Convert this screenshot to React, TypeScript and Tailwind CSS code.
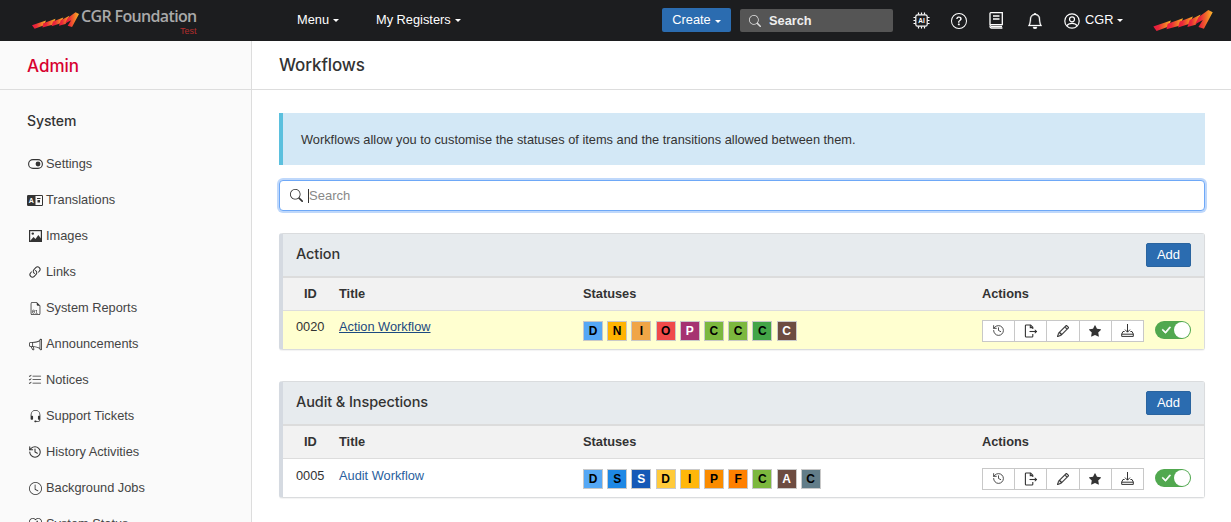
import React from "react";
import {
  BsLink45Deg, BsFileEarmarkBinary, BsMegaphone, BsListCheck, BsHeadset, BsClock, BsHeartPulse,
  BsSearch, BsQuestionCircle, BsBell, BsPencil, BsStarFill, BsCheckLg,
} from "react-icons/bs";
import { History } from "lucide-react";

const Caret = () => (
  <span className="ml-[4px] inline-block w-0 h-0 align-middle border-x-[3px] border-x-transparent border-t-[3px] border-t-current" />
);

function Logo({ w, h, id }: { w: number; h: number; id: string }) {
  return (
    <svg width={w} height={h} viewBox="0 0 54 20" className="shrink-0">
      <defs>
        <linearGradient id={id} x1="0" x2="1" y1="0" y2="0">
          <stop offset="0" stopColor="#e8173f" />
          <stop offset="0.3" stopColor="#e9283a" />
          <stop offset="0.6" stopColor="#f1662a" />
          <stop offset="0.85" stopColor="#f79a28" />
          <stop offset="1" stopColor="#fbb532" />
        </linearGradient>
      </defs>
      <g fill={`url(#${id})`}>
        <polygon points="0,15 16,9.5 14,15 3,19" />
        <polygon points="13,12.5 27,7.5 24.5,14 12,17.5" />
        <polygon points="24,10.5 36,6 33,12.5 22.5,16" />
        <polygon points="33,9 43,4 38.5,13.5 31,15.5" />
        <polygon points="41,6.5 50,0 54,2 46,17 41,15.5 45,9 38,13" />
      </g>
    </svg>
  );
}

function ChipIcon() {
  return (
    <svg width="17" height="17" viewBox="0 0 17 17" fill="none" stroke="#fff" strokeWidth="1.2">
      <rect x="2.8" y="2.8" width="11.4" height="11.4" rx="1.8" />
      <path d="M5.5 0.5v2M8.5 0.5v2M11.5 0.5v2M5.5 14.5v2M8.5 14.5v2M11.5 14.5v2M0.5 5.5h2M0.5 8.5h2M0.5 11.5h2M14.5 5.5h2M14.5 8.5h2M14.5 11.5h2" />
      <text x="8.5" y="11" fill="#fff" stroke="none" fontSize="6.5" fontWeight="700" textAnchor="middle" fontFamily="Liberation Sans">AI</text>
    </svg>
  );
}

const ToggleIcon = () => (
  <svg width="15" height="10" viewBox="0 0 15 10" fill="none" stroke="currentColor" strokeWidth="1.1">
    <rect x="0.6" y="0.6" width="13.8" height="8.8" rx="4.4" />
    <circle cx="10" cy="5" r="2.4" fill="currentColor" stroke="none" />
  </svg>
);

const TranslateIcon = () => (
  <svg width="16" height="11" viewBox="0 0 16 11">
    <rect x="0" y="0" width="16" height="11" rx="1.2" fill="currentColor" />
    <rect x="8.5" y="1" width="6.5" height="9" fill="#fafafa" />
    <text x="4.4" y="8.2" fill="#fafafa" fontSize="7" fontWeight="700" textAnchor="middle" fontFamily="Liberation Sans">A</text>
    <rect x="10" y="3" width="3.5" height="1" fill="currentColor" />
    <rect x="10.5" y="5" width="2.5" height="2.5" fill="currentColor" />
  </svg>
);

const BookIcon = () => (
  <svg width="15" height="17" viewBox="0 0 15 17" fill="none" stroke="#fff" strokeWidth="1.3">
    <path d="M1 13V1.5a.8.8 0 0 1 .8-.8h11.5V12.6H2.4A1.7 1.7 0 0 0 1 14.4 1.7 1.7 0 0 0 2.4 16h11" />
    <path d="M4 4h6.5M4 7h6.5M2 14.4h11" />
  </svg>
);

const UserIcon = () => (
  <svg width="16" height="16" viewBox="0 0 16 16" fill="none" stroke="#fff" strokeWidth="1.2">
    <circle cx="8" cy="8" r="7.2" />
    <circle cx="8" cy="6.3" r="2.5" />
    <path d="M3 12.8c.8-1.6 2.6-2.4 5-2.4s4.2.8 5 2.4" />
  </svg>
);

const ExportIcon = () => (
  <svg width="14" height="14" viewBox="0 0 14 14" fill="none" stroke="currentColor" strokeWidth="1.1">
    <path d="M8.8 5V3.2L6.6 1H2.2a.8.8 0 0 0-.8.8v10.4c0 .4.4.8.8.8h5.8c.4 0 .8-.4.8-.8V10" />
    <path d="M6.3 1v2.6h2.5" />
    <path d="M5.5 7.5h7.5" />
    <path d="M10.8 5.3l2.4 2.2-2.4 2.2" fill="currentColor" stroke="none" />
  </svg>
);

const TrayIcon = () => (
  <svg width="13" height="13" viewBox="0 0 13 13" fill="none" stroke="currentColor" strokeWidth="1">
    <path d="M6.5 0v8M4 5.6l2.5 2.6L9 5.6" />
    <path d="M3.6 7.5H2L.7 10v2.4h11.6V10L11 7.5H9.4" />
    <path d="M.7 10.2h11.6" />
  </svg>
);

const ImageIcon = () => (
  <svg width="13" height="12" viewBox="0 0 13 12">
    <rect x="0.6" y="0.6" width="11.8" height="10.8" fill="none" stroke="currentColor" strokeWidth="1.2" />
    <circle cx="3.8" cy="3.6" r="1.2" fill="currentColor" />
    <path d="M1 11l3.5-4 2 2 2.8-4L12.4 9v2.4z" fill="currentColor" />
  </svg>
);

const nav: [React.ReactNode, string][] = [
  [<ToggleIcon />, "Settings"],
  [<TranslateIcon />, "Translations"],
  [<ImageIcon />, "Images"],
  [<BsLink45Deg size={17} />, "Links"],
  [<BsFileEarmarkBinary size={13} />, "System Reports"],
  [<BsMegaphone size={13} />, "Announcements"],
  [<BsListCheck size={14} />, "Notices"],
  [<BsHeadset size={13} />, "Support Tickets"],
  [<History size={14} strokeWidth={1.8} />, "History Activities"],
  [<BsClock size={13} />, "Background Jobs"],
  [<BsHeartPulse size={13} />, "System Status"],
];

type S = [string, string, string];
const actionStatuses: S[] = [
  ["D", "#55a8f5", "#000"], ["N", "#ffb300", "#000"], ["I", "#f0a546", "#000"], ["O", "#f04a4a", "#000"], ["P", "#a63371", "#fff"],
  ["C", "#7cb83e", "#000"], ["C", "#7cb83e", "#000"], ["C", "#43a547", "#000"], ["C", "#6d4c41", "#fff"],
];
const auditStatuses: S[] = [
  ["D", "#55a8f5", "#000"], ["S", "#1e88e5", "#000"], ["S", "#1559b7", "#fff"], ["D", "#ffca3a", "#000"], ["I", "#ffb70a", "#000"],
  ["P", "#fb8c00", "#000"], ["F", "#ff8000", "#000"], ["C", "#7cb83e", "#000"], ["A", "#6d4c41", "#fff"], ["C", "#627d89", "#000"],
];

function Panel({ title, id, name, statuses, highlight }: { title: string; id: string; name: string; statuses: S[]; highlight?: boolean }) {
  const actions = [<History size={13} strokeWidth={1.6} />, <ExportIcon />, <BsPencil size={12} strokeWidth={0.5} />, <BsStarFill size={12} />, <TrayIcon />];
  const textOffset = highlight ? "-mt-[6px]" : "-mt-[5px]";
  return (
    <section className="rounded-[3px] border border-[#dadcde] border-l-[4px] border-l-[#d5dae1] bg-white shadow-[0_1px_1px_rgba(0,0,0,0.05)]">
      <div className="h-[44px] flex items-center justify-between pl-[13px] pr-[13px] bg-[#e7ebee] border-b-2 border-[#dcdcdc]">
        <h3 className="text-[14.5px] text-[#333] font-medium font-['Inter',sans-serif] tracking-[-0.1px] -mt-[2px]">{title}</h3>
        <button className="w-[45px] h-[24px] rounded-[2px] bg-[#2b6cb0] border border-[#2a649f] text-white text-[13px]">Add</button>
      </div>
      <div className="h-[33px] flex items-center bg-[#f2f2f2] border-b border-[#ddd] text-[12.8px] font-bold text-[#333]">
        <div className="w-[56px] pl-[21px]">ID</div>
        <div className="w-[244px]">Title</div>
        <div className="w-[399px]">Statuses</div>
        <div>Actions</div>
      </div>
      <div className={"h-[38px] flex items-center text-[12.8px] text-[#333] " + (highlight ? "bg-[#ffffd0]" : "bg-white")}>
        <div className={"w-[56px] pl-[13px] " + textOffset}>{id}</div>
        <div className={"w-[244px] " + textOffset}>
          <a className={highlight ? "text-[#1c4a80] underline" : "text-[#2a5f9e]"}>{name}</a>
        </div>
        <div className="w-[399px] flex gap-[4.2px] mt-px">
          {statuses.map((s, i) => (
            <span
              key={i}
              className="w-[20px] h-[20px] flex items-center justify-center border border-[#c9c9c9] text-[12px] font-bold"
              style={{ background: s[1], color: s[2] }}
            >
              {s[0]}
            </span>
          ))}
        </div>
        <div className="flex items-center h-[22px] w-[162px] border border-[#c8c8c8] bg-white mt-px divide-x divide-[#c8c8c8] text-[#333]">
          {actions.map((a, i) => (
            <span key={i} className="flex-1 h-full flex items-center justify-center">{a}</span>
          ))}
        </div>
        <div className="ml-[11px] w-[36px] h-[18px] rounded-full bg-[#51a84f] relative flex items-center pl-[5px]">
          <BsCheckLg size={12} className="text-white" strokeWidth={1} />
          <span className="absolute right-[1px] top-[1px] w-[16px] h-[16px] rounded-full bg-white" />
        </div>
      </div>
    </section>
  );
}

export default function App() {
  return (
    <div className="h-[522px] w-[1231px] overflow-hidden flex flex-col bg-white font-['Liberation_Sans',Arial,sans-serif]">
      <header className="h-[41px] shrink-0 bg-[#1c1d1f] flex items-center text-white text-[12.8px]">
        <div className="w-[297px] shrink-0 flex items-center pl-[32px]">
          <Logo w={47} h={18} id="lg1" />
          <div className="ml-[2px] relative -mt-[5px]">
            <span className="text-[#a9a9a9] text-[16px] font-semibold tracking-[-0.65px] leading-none font-['Open_Sans',sans-serif]">CGR Foundation</span>
            <span className="absolute right-0 top-[19px] text-[#b22d2d] text-[9px] leading-none">Test</span>
          </div>
        </div>
        <span className="w-[79px] -mt-[2px]">Menu<Caret /></span>
        <span className="w-[286px] -mt-[2px]">My Registers<Caret /></span>
        <button className="w-[69px] h-[24px] rounded-[2px] bg-[#2b6cb0] text-white text-[12.8px] -mt-px">Create<Caret /></button>
        <div className="ml-[9px] w-[153px] h-[23px] rounded-[2px] bg-[#555] flex items-center pl-[9px] font-bold text-[12.8px]">
          <BsSearch size={12} className="mr-[8px] text-[#ddd]" />
          <span className="text-[#eee]">Search</span>
        </div>
        <div className="ml-[20px] flex items-center">
          <span className="w-[38px]"><ChipIcon /></span>
          <span className="w-[37px]"><BsQuestionCircle size={16} /></span>
          <span className="w-[38px] pl-px"><BookIcon /></span>
          <span className="w-[35px] pl-px"><BsBell size={16} strokeWidth={0.3} /></span>
          <span className="ml-[3px]"><UserIcon /></span>
          <span className="ml-[5px] w-[68px] -mt-[2px]">CGR<Caret /></span>
        </div>
        <Logo w={60} h={22} id="lg2" />
      </header>
      <div className="flex-1 flex min-h-0">
        <aside className="w-[252px] shrink-0 bg-[#fafafa] border-r border-[#ddd] overflow-hidden">
          <div className="h-[49px] border-b border-[#ddd] pl-[27px] flex items-center">
            <h2 className="text-[#d7002f] text-[17px] font-medium font-['Inter',sans-serif] mt-[3px]">Admin</h2>
          </div>
          <div className="pl-[27px] pt-[23px] text-[#333]">
            <h4 className="text-[14px] font-medium h-[16px] leading-[16px] font-['Inter',sans-serif] tracking-[-0.1px]">System</h4>
            <ul className="mt-[26px] flex flex-col gap-[18px]">
              {nav.map(([icon, label]) => (
                <li key={label} className="flex items-center h-[18px] text-[12.8px] text-[#444]">
                  <span className="w-[19px] flex justify-center pr-[3px] text-[#333]">{icon}</span>
                  {label}
                </li>
              ))}
            </ul>
          </div>
        </aside>
        <main className="flex-1 min-w-0">
          <div className="h-[49px] border-b border-[#ddd] pl-[27px] flex items-center">
            <h1 className="text-[17px] font-medium text-[#333] font-['Inter',sans-serif] tracking-[-0.1px] mt-[2px]">Workflows</h1>
          </div>
          <div className="pl-[27px] pr-[26px] pt-[23px]">
            <div className="h-[52px] bg-[#d3e8f6] border-l-[4px] border-[#5bc0de] pl-[18px] flex items-center text-[12.8px] text-[#333]">
              <span className="mt-px">Workflows allow you to customise the statuses of items and the transitions allowed between them.</span>
            </div>
            <div className="mt-[15px] h-[31px] rounded-[4px] border border-[#6ea8f7] shadow-[0_0_0_2px_#bfd8fb] bg-white flex items-center pl-[10px] text-[13px] text-[#888]">
              <BsSearch size={13} className="text-[#333] mr-[5px]" />
              <span className="border-l border-[#333] leading-[14px]">Search</span>
            </div>
            <div className="mt-[22px] flex flex-col gap-[31px]">
              <Panel title="Action" id="0020" name="Action Workflow" statuses={actionStatuses} highlight />
              <Panel title="Audit & Inspections" id="0005" name="Audit Workflow" statuses={auditStatuses} />
            </div>
          </div>
        </main>
      </div>
    </div>
  );
}
